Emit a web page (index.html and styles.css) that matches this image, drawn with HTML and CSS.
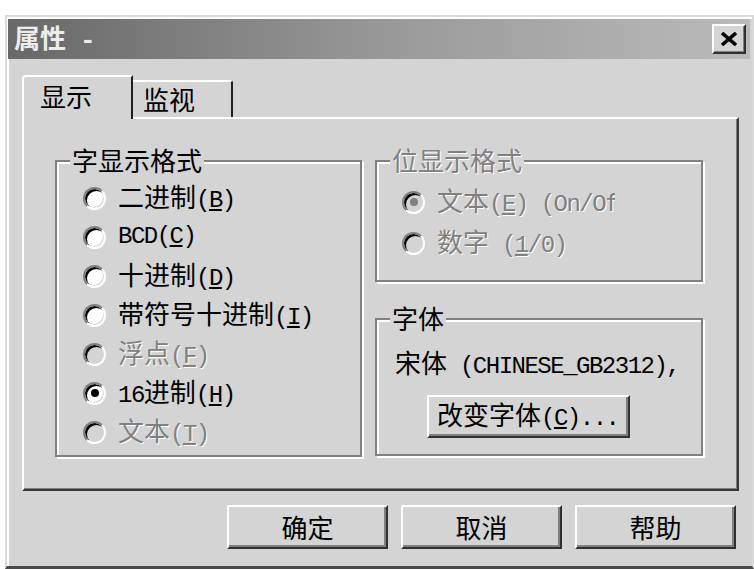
FILE: index.html
```html
<!DOCTYPE html>
<html lang="zh-CN">
<head>
<meta charset="utf-8">
<title>属性</title>
<link rel="stylesheet" href="styles.css">
</head>
<body>
<div class="dialog">
  <div class="titlebar">
    <span class="title">属性<span class="en"> -</span></span>
    <button class="close" aria-label="关闭">
      <svg width="18" height="14" viewBox="0 0 18 14"><path d="M2 1 L16 13 M16 1 L2 13" stroke="#000" stroke-width="3.6" fill="none"/></svg>
    </button>
  </div>
  <div class="content">
    <div class="tabs">
      <div class="tab active">显示</div>
      <div class="tab inactive">监视</div>
    </div>
    <div class="panel">
      <div class="group g-word">
        <div class="group-title">字显示格式</div>
        <div class="opts opts-word">
          <div class="opt"><span class="radio"></span><span>二进制<span class="en">(<u>B</u>)</span></span></div>
          <div class="opt"><span class="radio"></span><span class="en">BCD(<u>C</u>)</span></div>
          <div class="opt"><span class="radio"></span><span>十进制<span class="en">(<u>D</u>)</span></span></div>
          <div class="opt"><span class="radio"></span><span>带符号十进制<span class="en">(<u>I</u>)</span></span></div>
          <div class="opt disabled"><span class="radio"></span><span>浮点<span class="en">(<u>F</u>)</span></span></div>
          <div class="opt"><span class="radio checked"></span><span><span class="en">16</span>进制<span class="en">(<u>H</u>)</span></span></div>
          <div class="opt disabled"><span class="radio"></span><span>文本<span class="en">(<u>T</u>)</span></span></div>
        </div>
      </div>
      <div class="col-right">
        <div class="group g-bit disabled">
          <div class="group-title">位显示格式</div>
          <div class="opts opts-bit">
            <div class="opt disabled"><span class="radio checked"></span><span class="clip">文本<span class="en">(<u>E</u>) (On/Off)</span></span></div>
            <div class="opt disabled"><span class="radio"></span><span>数字<span class="en"> (<u>1</u>/0)</span></span></div>
          </div>
        </div>
        <div class="group g-font">
          <div class="group-title">字体</div>
          <div class="font-name">宋体<span class="en"> (CHINESE_GB2312),</span></div>
          <button class="btn btn-font">改变字体<span class="en">(<u>C</u>)...</span></button>
        </div>
      </div>
    </div>
    <div class="actions">
      <button class="btn">确定</button>
      <button class="btn">取消</button>
      <button class="btn">帮助</button>
    </div>
  </div>
</div>
</body>
</html>
```

FILE: styles.css
```css
* { box-sizing: border-box; }
html, body { margin: 0; padding: 0; background: #fff; }
body {
  font-family: "Noto Sans CJK SC", sans-serif;
  font-size: 26px;
  line-height: 26px;
  color: #000;
}
.en {
  font-family: "Liberation Mono", "Noto Sans CJK SC", monospace;
  font-size: 24px;
  letter-spacing: -1.5px;
  white-space: pre;
}
u { text-underline-offset: 2px; }

.dialog {
  margin: 15px 0 0 5px;
  width: 749px;
  height: 554px;
  background: #d4d4d4;
  border: 2px solid #dadada;
  border-bottom: 3px solid #4a4a4a;
  padding: 2px 2px 0 1px;
  box-shadow: inset 2px 2px 0 #fff;
  overflow: hidden;
}

.titlebar {
  height: 40px;
  display: flex;
  align-items: center;
  padding: 0 4px 0 6px;
  background: linear-gradient(to right, #686868, #9c9c9c 55%, #bababa);
}
.title {
  font-weight: 700;
  color: #ececec;
}
.title .en { font-size: 26px; }
.close {
  margin-left: auto;
  width: 34px;
  height: 30px;
  padding: 0;
  background: #d4d4d4;
  border: 2px solid;
  border-color: #fff #303030 #303030 #fff;
  box-shadow: inset -1px -1px 0 #808080;
  display: flex;
  align-items: center;
  justify-content: center;
}

.content { padding: 16px 11px 0 14px; }

.tabs {
  display: flex;
  align-items: flex-end;
  height: 42px;
  position: relative;
  z-index: 1;
}
.tab {
  background: #d4d4d4;
  border-top: 2px solid #fff;
  border-right: 2px solid #202020;
}
.tab.active {
  width: 111px;
  height: 44px;
  margin-bottom: -2px;
  border-left: 2px solid #fff;
  border-top-left-radius: 4px;
  padding: 6px 0 0 16px;
}
.tab.inactive {
  width: 100px;
  height: 37px;
  border-top-right-radius: 3px;
  padding: 4px 0 0 10px;
}

.panel {
  height: 374px;
  border: 2px solid;
  border-color: #fff #383838 #383838 #fff;
  box-shadow: inset -1px -1px 0 #808080;
  padding: 41px 0 0 31px;
  display: grid;
  grid-template-columns: 307px 328px;
  column-gap: 13px;
  align-items: start;
}

.group {
  position: relative;
  border: 2px solid #808080;
  box-shadow: inset 2px 2px 0 #fff, 2px 2px 0 #fff;
}
.group-title {
  position: absolute;
  top: -15px;
  left: 13px;
  padding: 0 2px;
  background: #d4d4d4;
  white-space: nowrap;
}
.group.disabled .group-title {
  color: #808080;
  text-shadow: 1px 1px 0 #fff;
}

.g-word { height: 297px; padding: 23px 0 0 26px; }
.col-right { display: flex; flex-direction: column; gap: 36px; }
.g-bit { height: 122px; padding: 27px 0 0 25px; }
.g-font { height: 138px; padding: 29px 0 0 18px; }

.opts { display: flex; flex-direction: column; }
.opts-word { gap: 13px; }
.opts-bit { gap: 15px; }

.opt {
  display: flex;
  align-items: center;
  height: 26px;
  white-space: nowrap;
}
.radio {
  flex: none;
  position: relative;
  width: 23px;
  height: 23px;
  margin-right: 12px;
  border-radius: 50%;
  border: 2px solid;
  border-color: #808080 #fff #fff #808080;
  background: #fff;
  box-shadow: inset 2px 2px 0 #000, inset -1px -1px 0 #d4d4d4;
}
.radio.checked::after {
  content: "";
  position: absolute;
  left: 50%;
  top: 50%;
  width: 8px;
  height: 8px;
  margin: -4px 0 0 -4px;
  border-radius: 50%;
  background: #000;
}
.opt.disabled { color: #808080; text-shadow: 1px 1px 0 #fff; }
.opt.disabled .radio { background: #d4d4d4; }
.opt.disabled .radio.checked::after { background: #808080; }
.clip { display: block; width: 178px; overflow: hidden; }

.font-name { white-space: nowrap; height: 26px; }

.btn {
  font: inherit;
  color: #000;
  background: #d4d4d4;
  border: 2px solid;
  border-color: #fff #303030 #303030 #fff;
  box-shadow: inset -2px -2px 0 #808080;
  padding: 0;
  width: 161px;
  height: 44px;
}
.btn-font {
  display: block;
  width: 203px;
  height: 43px;
  margin: 20px 0 0 32px;
  padding: 0 0 0 8px;
  text-align: left;
  white-space: nowrap;
}

.actions {
  display: flex;
  justify-content: flex-end;
  gap: 13px;
  margin-top: 14px;
  padding-right: 3px;
}
```
